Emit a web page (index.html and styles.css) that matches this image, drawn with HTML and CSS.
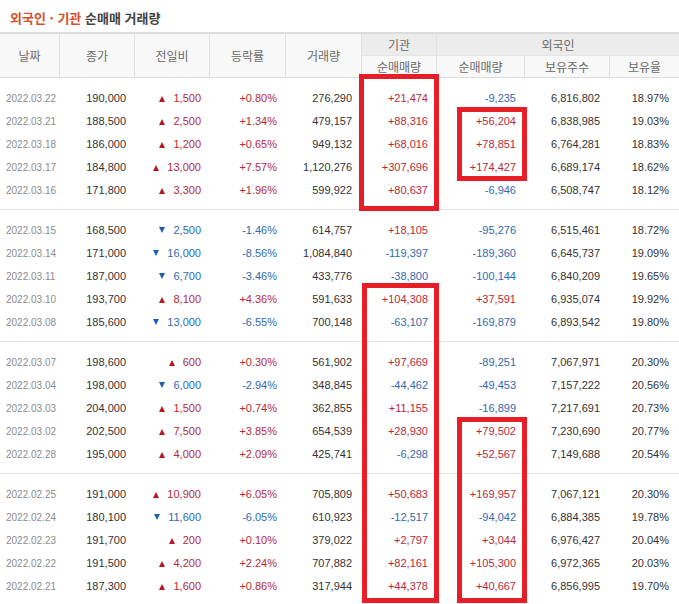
FILE: index.html
```html
<!DOCTYPE html>
<html lang="ko">
<head>
<meta charset="utf-8">
<link rel="stylesheet" href="styles.css">
</head>
<body>
<div class="page">
  <h2 class="title"><span class="accent">외국인 · 기관</span> 순매매 거래량</h2>
  <div class="head">
    <div class="hc span2">날짜</div>
    <div class="hc span2">종가</div>
    <div class="hc span2">전일비</div>
    <div class="hc span2">등락률</div>
    <div class="hc span2">거래량</div>
    <div class="hc top">기관</div>
    <div class="hc top wide">외국인</div>
    <div class="hc sub">순매매량</div>
    <div class="hc sub">순매매량</div>
    <div class="hc sub">보유주수</div>
    <div class="hc sub last">보유율</div>
  </div>

  <div class="group">
    <div class="row"><span class="d">2022.03.22</span><span>190,000</span><span class="up"><i class="tu"></i>1,500</span><span class="up">+0.80%</span><span>276,290</span><span class="up">+21,474</span><span class="dn">-9,235</span><span>6,816,802</span><span>18.97%</span></div>
    <div class="row"><span class="d">2022.03.21</span><span>188,500</span><span class="up"><i class="tu"></i>2,500</span><span class="up">+1.34%</span><span>479,157</span><span class="up">+88,316</span><span class="up">+56,204</span><span>6,838,985</span><span>19.03%</span></div>
    <div class="row"><span class="d">2022.03.18</span><span>186,000</span><span class="up"><i class="tu"></i>1,200</span><span class="up">+0.65%</span><span>949,132</span><span class="up">+68,016</span><span class="up">+78,851</span><span>6,764,281</span><span>18.83%</span></div>
    <div class="row"><span class="d">2022.03.17</span><span>184,800</span><span class="up"><i class="tu"></i>13,000</span><span class="up">+7.57%</span><span>1,120,276</span><span class="up">+307,696</span><span class="up">+174,427</span><span>6,689,174</span><span>18.62%</span></div>
    <div class="row"><span class="d">2022.03.16</span><span>171,800</span><span class="up"><i class="tu"></i>3,300</span><span class="up">+1.96%</span><span>599,922</span><span class="up">+80,637</span><span class="dn">-6,946</span><span>6,508,747</span><span>18.12%</span></div>
  </div>

  <div class="group">
    <div class="row"><span class="d">2022.03.15</span><span>168,500</span><span class="dn"><i class="td"></i>2,500</span><span class="dn">-1.46%</span><span>614,757</span><span class="up">+18,105</span><span class="dn">-95,276</span><span>6,515,461</span><span>18.72%</span></div>
    <div class="row"><span class="d">2022.03.14</span><span>171,000</span><span class="dn"><i class="td"></i>16,000</span><span class="dn">-8.56%</span><span>1,084,840</span><span class="dn">-119,397</span><span class="dn">-189,360</span><span>6,645,737</span><span>19.09%</span></div>
    <div class="row"><span class="d">2022.03.11</span><span>187,000</span><span class="dn"><i class="td"></i>6,700</span><span class="dn">-3.46%</span><span>433,776</span><span class="dn">-38,800</span><span class="dn">-100,144</span><span>6,840,209</span><span>19.65%</span></div>
    <div class="row"><span class="d">2022.03.10</span><span>193,700</span><span class="up"><i class="tu"></i>8,100</span><span class="up">+4.36%</span><span>591,633</span><span class="up">+104,308</span><span class="up">+37,591</span><span>6,935,074</span><span>19.92%</span></div>
    <div class="row"><span class="d">2022.03.08</span><span>185,600</span><span class="dn"><i class="td"></i>13,000</span><span class="dn">-6.55%</span><span>700,148</span><span class="dn">-63,107</span><span class="dn">-169,879</span><span>6,893,542</span><span>19.80%</span></div>
  </div>

  <div class="group">
    <div class="row"><span class="d">2022.03.07</span><span>198,600</span><span class="up"><i class="tu"></i>600</span><span class="up">+0.30%</span><span>561,902</span><span class="up">+97,669</span><span class="dn">-89,251</span><span>7,067,971</span><span>20.30%</span></div>
    <div class="row"><span class="d">2022.03.04</span><span>198,000</span><span class="dn"><i class="td"></i>6,000</span><span class="dn">-2.94%</span><span>348,845</span><span class="dn">-44,462</span><span class="dn">-49,453</span><span>7,157,222</span><span>20.56%</span></div>
    <div class="row"><span class="d">2022.03.03</span><span>204,000</span><span class="up"><i class="tu"></i>1,500</span><span class="up">+0.74%</span><span>362,855</span><span class="up">+11,155</span><span class="dn">-16,899</span><span>7,217,691</span><span>20.73%</span></div>
    <div class="row"><span class="d">2022.03.02</span><span>202,500</span><span class="up"><i class="tu"></i>7,500</span><span class="up">+3.85%</span><span>654,539</span><span class="up">+28,930</span><span class="up">+79,502</span><span>7,230,690</span><span>20.77%</span></div>
    <div class="row"><span class="d">2022.02.28</span><span>195,000</span><span class="up"><i class="tu"></i>4,000</span><span class="up">+2.09%</span><span>425,741</span><span class="dn">-6,298</span><span class="up">+52,567</span><span>7,149,688</span><span>20.54%</span></div>
  </div>

  <div class="group">
    <div class="row"><span class="d">2022.02.25</span><span>191,000</span><span class="up"><i class="tu"></i>10,900</span><span class="up">+6.05%</span><span>705,809</span><span class="up">+50,683</span><span class="up">+169,957</span><span>7,067,121</span><span>20.30%</span></div>
    <div class="row"><span class="d">2022.02.24</span><span>180,100</span><span class="dn"><i class="td"></i>11,600</span><span class="dn">-6.05%</span><span>610,923</span><span class="dn">-12,517</span><span class="dn">-94,042</span><span>6,884,385</span><span>19.78%</span></div>
    <div class="row"><span class="d">2022.02.23</span><span>191,700</span><span class="up"><i class="tu"></i>200</span><span class="up">+0.10%</span><span>379,022</span><span class="up">+2,797</span><span class="up">+3,044</span><span>6,976,427</span><span>20.04%</span></div>
    <div class="row"><span class="d">2022.02.22</span><span>191,500</span><span class="up"><i class="tu"></i>4,200</span><span class="up">+2.24%</span><span>707,882</span><span class="up">+82,161</span><span class="up">+105,300</span><span>6,972,365</span><span>20.03%</span></div>
    <div class="row"><span class="d">2022.02.21</span><span>187,300</span><span class="up"><i class="tu"></i>1,600</span><span class="up">+0.86%</span><span>317,944</span><span class="up">+44,378</span><span class="up">+40,667</span><span>6,856,995</span><span>19.70%</span></div>
  </div>

  <div class="mark m1"></div>
  <div class="mark m2"></div>
  <div class="mark m3"></div>
  <div class="mark m4"></div>
</div>
</body>
</html>
```

FILE: styles.css
```css
* { box-sizing: border-box; }
html, body { margin: 0; padding: 0; background: #fff; }
.page {
  position: relative;
  width: 679px;
  height: 604px;
  overflow: hidden;
  font-family: "Liberation Sans", Arial, sans-serif;
  font-size: 11px;
  color: #333;
}
.title {
  margin: 0;
  height: 32px;
  padding: 9px 0 0 10px;
  font-family: "Noto Sans CJK KR", sans-serif;
  font-size: 13px;
  line-height: 18px;
  font-weight: bold;
  color: #444;
}
.title .accent { color: #d4502e; }

.head {
  display: grid;
  grid-template-columns: 60px 75px 75px 76px 76px 75px 88px 85px 69px;
  grid-template-rows: 22px 21px;
  border-top: 2px solid #dcdcdc;
  border-bottom: 1px solid #dcdcdc;
  font-family: "Noto Sans CJK KR", sans-serif;
  font-size: 12px;
  color: #6a6a6a;
  background: #f8f8f8;
}
.hc {
  display: flex;
  align-items: center;
  justify-content: center;
  border-right: 1px solid #e0e0e0;
}
.span2 { grid-row: span 2; }
.top { background: #ececec; border-bottom: 1px solid #e4e4e4; }
.wide { grid-column: span 3; border-right: none; }
.last { border-right: none; }

.group {
  padding: 9px 0 7px;
  border-bottom: 1px solid #e2e2e2;
}
.row {
  display: grid;
  grid-template-columns: 60px 75px 75px 76px 76px 75px 88px 85px 69px;
  height: 23px;
  line-height: 23px;
}
.row span {
  text-align: right;
  padding-right: 9px;
  white-space: nowrap;
}
.row span:nth-child(5), .row span:nth-child(8), .row span:nth-child(9) { padding-right: 10px; }
.row .d {
  text-align: left;
  padding: 0 0 0 6px;
  color: #8c8c8c;
  font-size: 10px;
}
.up { color: #b52a3a; }
.dn { color: #3069b0; }
.tu, .td {
  display: inline-block;
  width: 0;
  height: 0;
  margin-right: 8px;
  border-left: 3.5px solid transparent;
  border-right: 3.5px solid transparent;
  vertical-align: 0;
}
.tu { border-bottom: 6px solid #b5191f; }
.td { border-top: 6px solid #1d5fb0; vertical-align: 1px; }

.mark {
  position: absolute;
  border: 5px solid #e61e28;
}
.m1 { left: 359px; top: 74px; width: 80px; height: 137px; }
.m2 { left: 457px; top: 107px; width: 70px; height: 74px; }
.m3 { left: 362px; top: 283px; width: 77px; height: 320px; }
.m4 { left: 457px; top: 417px; width: 70px; height: 186px; }
```
